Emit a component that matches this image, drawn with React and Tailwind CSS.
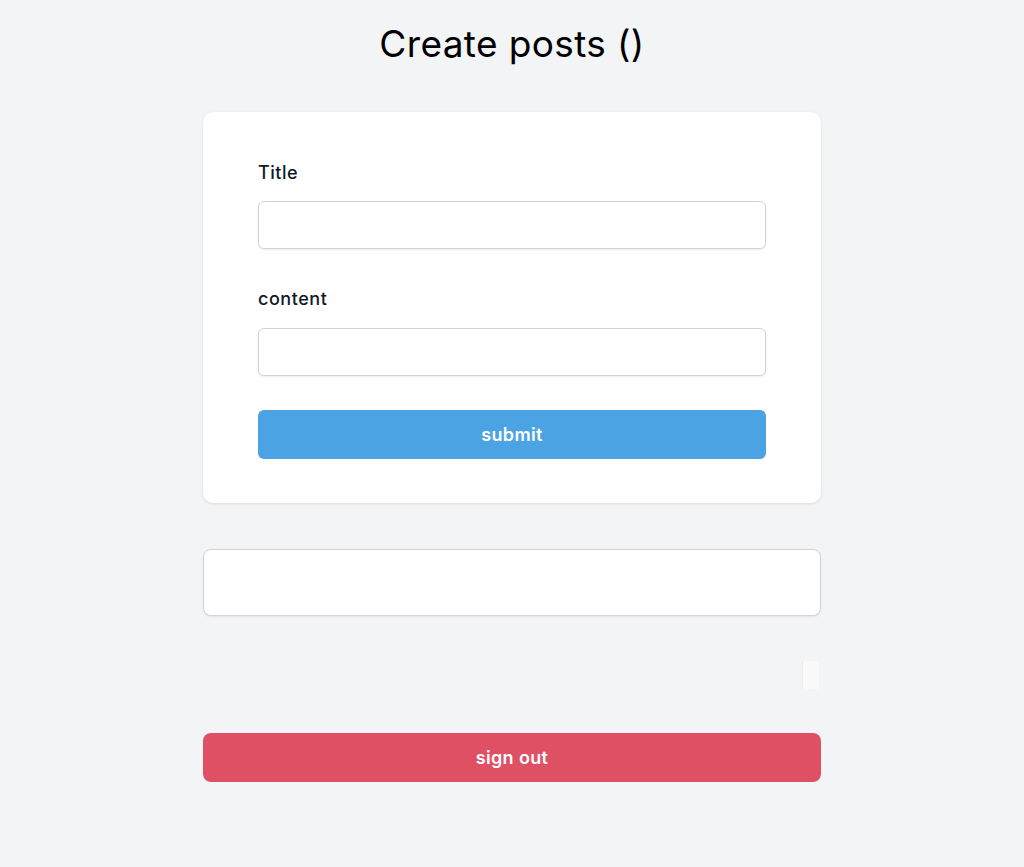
export default function App() {
  return (
    <div
      className="min-h-screen bg-[#f3f4f6] pt-[24px] pb-10"
      style={{ fontFamily: "Inter, 'Noto Sans', sans-serif" }}
    >
      <h1 className="text-center text-[37px] leading-[40px] font-normal tracking-[0.01em] text-black">
        Create posts ()
      </h1>

      <div className="w-[618px] mx-auto mt-[48px]">
        {/* Form card */}
        <div className="bg-white rounded-[10px] shadow-[0_1px_3px_rgba(0,0,0,0.1)] px-[55px] pt-[47px] pb-[44px]">
          <label className="block text-[18px] leading-[28px] font-medium tracking-[0.03em] text-[#111827] mb-[14px]">
            Title
          </label>
          <input
            type="text"
            className="block w-full h-12 rounded-md border border-[#cfd3d9] bg-white px-3 outline-none shadow-[0_1px_2px_rgba(0,0,0,0.08)]"
          />

          <label className="block text-[18px] leading-[28px] font-medium tracking-[0.03em] text-[#111827] mt-9 mb-[15px]">
            content
          </label>
          <input
            type="text"
            className="block w-full h-12 rounded-md border border-[#cfd3d9] bg-white px-3 outline-none shadow-[0_1px_2px_rgba(0,0,0,0.08)]"
          />

          <button className="mt-[34px] w-full h-[49px] rounded-md bg-[#4ba3e3] text-white text-[18px] font-semibold tracking-[0.02em]">
            submit
          </button>
        </div>

        {/* Empty post box */}
        <div className="mt-[46px] h-[67px] bg-white rounded-lg border border-[#d1d5db] shadow-[0_1px_2px_rgba(0,0,0,0.08)]"></div>

        <div className="mt-[45px] flex justify-end pr-[2px]">
          <button className="w-[17px] h-[28px] bg-[#f9f9f9] border-l border-[#ececec]"></button>
        </div>

        <button className="mt-[44px] w-full h-[49px] rounded-lg bg-[#e05064] text-white text-[18px] font-semibold tracking-[0.02em]">
          sign out
        </button>
      </div>
    </div>
  );
}
